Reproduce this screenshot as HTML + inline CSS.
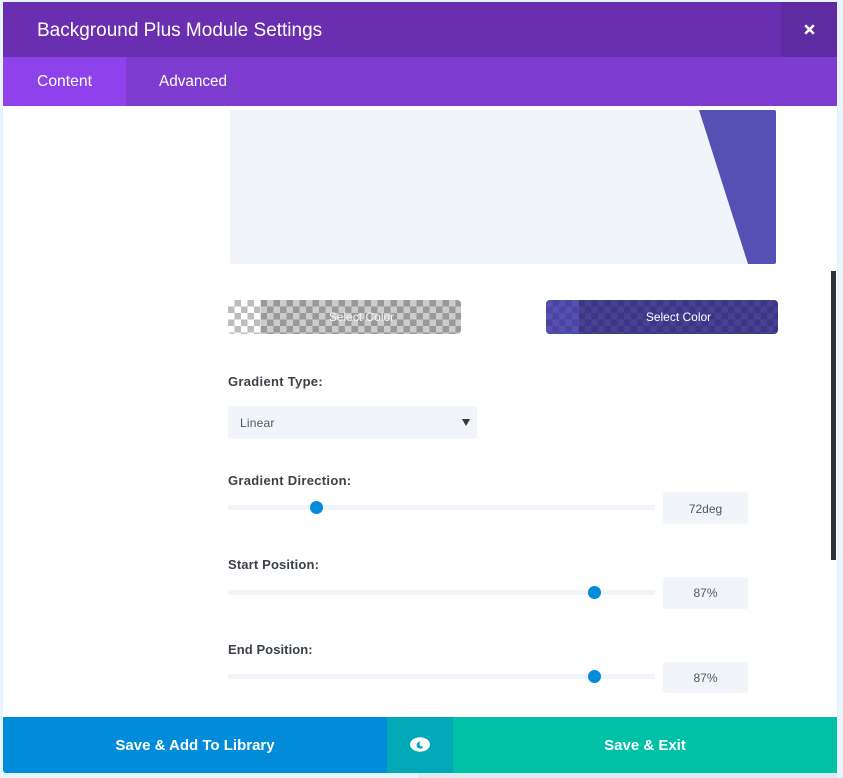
<!DOCTYPE html>
<html lang="en">
<head>
<meta charset="utf-8">
<title>Background Plus Module Settings</title>
<style>
html,body{margin:0;padding:0}
body{width:843px;height:778px;overflow:hidden;position:relative;background:#e8f5fc;font-family:"Liberation Sans","Noto Sans CJK JP",sans-serif}
div,span{position:absolute;box-sizing:border-box}
.t{white-space:nowrap;line-height:20px}
.lab{left:228px;font-size:13px;font-weight:700;color:#3b4148;letter-spacing:.3px;height:20px}
.track{left:228px;width:427px;height:5px;background:#f1f5f9}
.knob{width:13px;height:13px;border-radius:50%;background:#008bdb}
.inp{left:663px;width:85px;background:#f1f5f9;border-radius:3px;font-size:12px;color:#4c5866;text-align:center;line-height:34px}
.cb{top:300px;height:34px;width:233px;border-radius:4px;overflow:hidden;color:#fff;font-size:12px;text-align:center;line-height:34px}
</style>
</head>
<body>
<div style="left:418px;top:773px;width:425px;height:5px;background:#dfe9ef"></div>
<div style="left:837px;top:84px;width:6px;height:694px;background:#e8f5fc"></div>
<div style="left:3px;top:2px;width:834px;height:771px;background:#fff;overflow:hidden">
  <div style="left:0;top:0;width:834px;height:55px;background:#6a2eb0"></div>
  <div style="left:778px;top:0;width:56px;height:55px;background:#5f2ba3"></div>
  <div class="t" style="left:34px;top:19px;font-size:19px;color:#fff">Background Plus Module Settings</div>
  <svg style="position:absolute;left:800px;top:21px" width="13" height="13" viewBox="0 0 13 13"><path d="M2.2 2.2L10.8 10.8M10.8 2.2L2.2 10.8" stroke="#fff" stroke-width="2.5"/></svg>
  <div style="left:0;top:55px;width:834px;height:49px;background:#7e3bd0"></div>
  <div style="left:0;top:55px;width:123px;height:49px;background:#8f42ec"></div>
  <div class="t" style="left:34px;top:70px;font-size:15.7px;color:#fff">Content</div>
  <div class="t" style="left:156px;top:70px;font-size:15.3px;color:#fff">Advanced</div>
</div>

<svg style="position:absolute;left:230px;top:110px" width="546" height="154" viewBox="0 0 546 154">
  <rect width="546" height="154" rx="2" fill="#f1f4f9"/>
  <path d="M469 0H544Q546 0 546 2V152Q546 154 544 154H518Z" fill="#5650b5"/>
</svg>

<div class="cb" style="left:228px;background:repeating-conic-gradient(#999 0 25%,#ccc 0 50%) 0 0/13px 13px">
  <div style="left:0;top:0;width:33px;height:34px;background:repeating-conic-gradient(#bdbdbd 0 25%,#fff 0 50%) 0 0/13px 13px"></div>
  <span style="left:0;top:0;width:100%;height:100%;padding-left:34px;color:#f4f4f4">Select Color</span>
</div>
<div class="cb" style="left:546px;width:232px;background:repeating-conic-gradient(#3c3689 0 25%,#47418f 0 50%) 0 0/13px 13px">
  <div style="left:0;top:0;width:33px;height:34px;background:repeating-conic-gradient(#4a45a0 0 25%,#5650b5 0 50%) 0 0/13px 13px"></div>
  <span style="left:0;top:0;width:100%;height:100%;padding-left:33px">Select Color</span>
</div>

<div class="lab t" style="top:372px">Gradient Type:</div>
<div style="left:228px;top:406px;width:249px;height:33px;background:#f1f5f9;border-radius:3px"></div>
<div class="t" style="left:240px;top:413px;font-size:12px;color:#4c5866;letter-spacing:.2px">Linear</div>
<svg style="position:absolute;left:461px;top:417px" width="10" height="10" viewBox="0 0 10 10"><path d="M1 2H9L5 9Z" fill="#32373c"/></svg>

<div class="lab t" style="top:471px">Gradient Direction:</div>
<div class="track" style="top:505px"></div>
<div class="knob" style="left:310px;top:501px"></div>
<div class="inp" style="top:492px;height:32px;line-height:34px">72deg</div>

<div class="lab t" style="top:555px;letter-spacing:.15px">Start Position:</div>
<div class="track" style="top:590px"></div>
<div class="knob" style="left:588px;top:585.5px"></div>
<div class="inp" style="top:577px;height:32px;line-height:32px">87%</div>

<div class="lab t" style="top:640px;letter-spacing:.07px">End Position:</div>
<div class="track" style="top:674px"></div>
<div class="knob" style="left:588px;top:670px"></div>
<div class="inp" style="top:662px;height:31px;line-height:32px">87%</div>

<div style="left:831px;top:271px;width:5px;height:289px;background:#2e3237"></div>

<div style="left:3px;top:717px;width:384px;height:56px;background:#008bdb;border-radius:0 0 0 3px;color:#fff;font-size:15px;font-weight:700;text-align:center;line-height:58px">Save &amp; Add To Library</div>
<div style="left:387px;top:717px;width:66px;height:56px;background:#00a8b8"></div>
<svg style="position:absolute;left:410px;top:737px" width="20" height="15" viewBox="0 0 20 15">
  <ellipse cx="10" cy="7.5" rx="10" ry="7.2" fill="#fff"/>
  <path d="M10.5 4.5A3.6 3.6 0 1 0 13.5 9.5A3.8 3.8 0 0 1 10 8.8A3.8 3.8 0 0 1 10.5 4.5Z" fill="#00a8b8"/>
</svg>
<div style="left:453px;top:717px;width:384px;height:56px;background:#00c1a8;color:#fff;font-size:15px;font-weight:700;text-align:center;line-height:58px">Save &amp; Exit</div>
</body>
</html>
